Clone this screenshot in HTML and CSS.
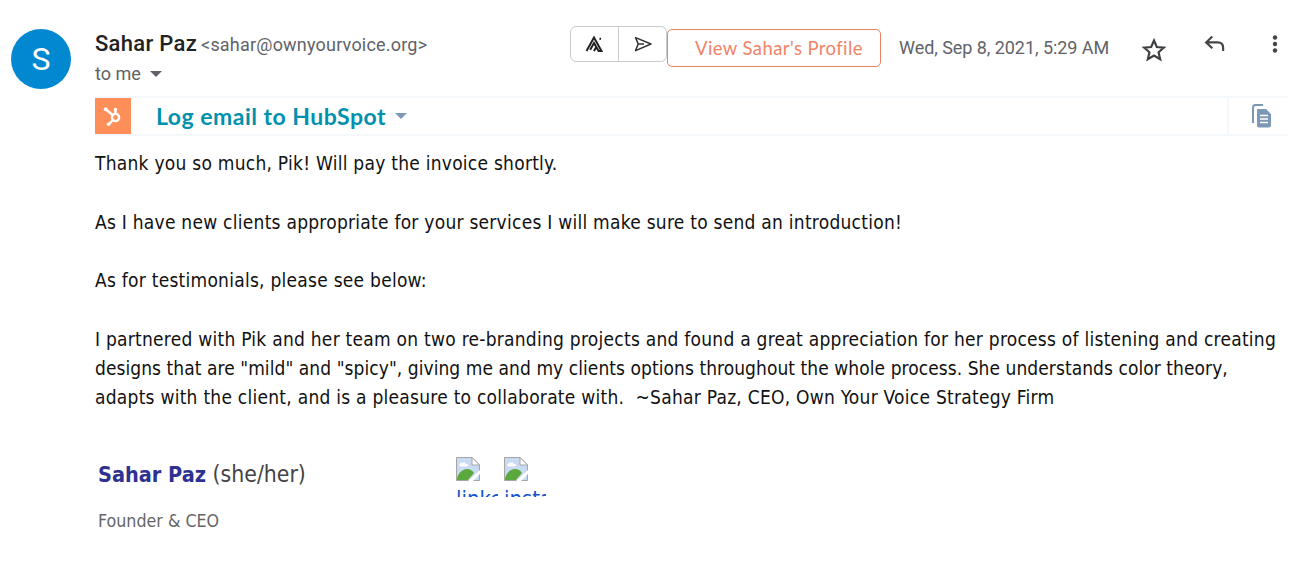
FILE: index.html
```html
<!DOCTYPE html>
<html lang="en">
<head>
<meta charset="utf-8">
<title>Email</title>
<link rel="stylesheet" href="styles.css">
</head>
<body>
<div class="mail">
  <div class="avatar">S</div>
  <div class="main">
    <div class="head">
      <div class="who">
        <div class="from"><span class="name">Sahar Paz</span> <span class="addr">&lt;sahar@ownyourvoice.org&gt;</span></div>
        <div class="to">to me <span class="caret"></span></div>
      </div>
      <div class="tools">
        <div class="toolgroup">
          <span class="toolbtn"><svg width="20" height="18" viewBox="0 0 20 18"><path d="M1.5 16 9 2.5 16.5 16 13.6 16 9 8 5.2 14.8M9 16l2-3.5M14.5 3.5l1.5.5" fill="none" stroke="#222" stroke-width="2"/></svg></span>
          <span class="toolbtn"><svg width="20" height="18" viewBox="0 0 20 18"><path d="M2.6 2.6 18 9 2.6 15.6 5.2 9ZM5.2 9H11" fill="none" stroke="#333" stroke-width="1.5" stroke-linejoin="round"/></svg></span>
        </div>
        <div class="profile">View Sahar's Profile</div>
        <div class="date">Wed, Sep 8, 2021, 5:29 AM</div>
        <svg class="star" width="26" height="26" viewBox="0 0 24 24"><path d="M12 3.2l2.6 6 6.5.6-4.9 4.3 1.5 6.4L12 17.1l-5.7 3.4 1.5-6.4-4.9-4.3 6.5-.6Z" fill="none" stroke="#3c4043" stroke-width="2" stroke-linejoin="miter"/></svg>
        <svg class="reply" width="26" height="26" viewBox="0 0 24 24"><path d="M9.5 5 3.8 10.500l5.700 5.500M4 10.500h10.500c3.200 0 5 2 5 5v3" fill="none" stroke="#444746" stroke-width="2"/></svg>
        <svg class="more" width="6" height="18" viewBox="0 0 6 18"><circle cx="3" cy="2.500" r="2.200" fill="#444746"/><circle cx="3" cy="9" r="2.200" fill="#444746"/><circle cx="3" cy="15.500" r="2.200" fill="#444746"/></svg>
      </div>
    </div>
    <div class="hub">
      <div class="hublogo"><svg width="24" height="24" viewBox="0 0 24 24"><g fill="none" stroke="#fff" stroke-width="2.400" stroke-linecap="round"><circle cx="14.500" cy="13.500" r="3.600"/><path d="M5 5.500 11.600 11M11.600 16.500 8 20M14.500 9.900V6"/></g><circle cx="4.800" cy="5.200" r="2" fill="#fff"/><circle cx="7.600" cy="20.200" r="1.800" fill="#fff"/><circle cx="14.500" cy="5.400" r="1.700" fill="#fff"/></svg></div>
      <div class="hubtext">Log email to HubSpot</div>
      <span class="hubcaret"></span>
      <div class="hubcopy"><svg width="24" height="26" viewBox="0 0 24 26"><path d="M4 20V4.500C4 3 5 2 6.500 2H14" fill="none" stroke="#7c98b6" stroke-width="2"/><path d="M8.500 6h8.500l5 5v11.500c0 1.200-1 2-2 2H10c-1.200 0-2-.8-2-2V7c0-.6.200-1 .5-1Z" fill="#7c98b6"/><path d="M11 12.500h8M11 16h8M11 19.500h8" stroke="#fff" stroke-width="1.500"/></svg></div>
    </div>
    <div class="body">
      <p>Thank you so much, Pik! Will pay the invoice shortly.</p>
      <p>As I have new clients appropriate for your services I will make sure to send an introduction!</p>
      <p>As for testimonials, please see below:</p>
      <p class="last">I partnered with Pik and her team on two re-branding projects and found a great appreciation for her process of listening and creating<br><span class="tight">designs that are "mild" and "spicy", giving me and my clients options throughout the whole process. She understands color theory,</span><br>adapts with the client, and is a pleasure to collaborate with.&nbsp; ~Sahar Paz, CEO, Own Your Voice Strategy Firm</p>
    </div>
    <div class="sig">
      <div class="sigtext">
        <div class="signame"><span class="sigblue">Sahar Paz</span> <span class="pron">(she/her)</span></div>
        <div class="sigrole">Founder &amp; CEO</div>
      </div>
      <div class="sigicons">
        <div class="broken">
          <svg width="24" height="24" viewBox="0 0 24 24"><path d="M.5.5H16L23.500 8V23.500H.5Z" fill="#c9dbf2" stroke="#a5a5a5"/><path d="M16 .5V8H23.500Z" fill="#fff" stroke="#a5a5a5"/><path d="M3 8c2-3 6-3 7-1 3 0 3 2.500 0 2.500H4Z" fill="#fff"/><path d="M1 23c0-6 5-11 10-11 3 0 6 2 7 4L12 23Z" fill="#5ba83c"/><path d="M12 24 24 13v4l-7 7Z" fill="#fff"/></svg>
          <a class="alt">linkedin</a>
        </div>
        <div class="broken">
          <svg width="24" height="24" viewBox="0 0 24 24"><path d="M.5.5H16L23.500 8V23.500H.5Z" fill="#c9dbf2" stroke="#a5a5a5"/><path d="M16 .5V8H23.500Z" fill="#fff" stroke="#a5a5a5"/><path d="M3 8c2-3 6-3 7-1 3 0 3 2.500 0 2.500H4Z" fill="#fff"/><path d="M1 23c0-6 5-11 10-11 3 0 6 2 7 4L12 23Z" fill="#5ba83c"/><path d="M12 24 24 13v4l-7 7Z" fill="#fff"/></svg>
          <a class="alt">instagram</a>
        </div>
      </div>
    </div>
  </div>
</div>
</body>
</html>
```
FILE: styles.css
```css
* { box-sizing: border-box; }
html, body { margin: 0; padding: 0; background: #fff; overflow: hidden; }
body { width: 1306px; height: 561px; font-family: Roboto, sans-serif; }
.mail { display: flex; padding: 29px 18px 0 11px; gap: 24px; }
.avatar { width: 60px; height: 60px; border-radius: 50%; background: #0288d1; color: #fff; display: flex; align-items: center; justify-content: center; font-size: 32px; flex: none; }
.main { flex: 1; min-width: 0; }
.head { display: flex; justify-content: space-between; height: 70px; margin-top: -3px; padding-right: 10px; }
.from { line-height: 30px; white-space: nowrap; padding-top: 3px; }
.name { font-size: 22px; font-weight: 500; color: #222; letter-spacing: .3px; }
.addr { font-size: 18px; color: #5f6368; letter-spacing: .2px; }
.to { font-size: 18px; color: #5f6368; line-height: 28px; margin-top: -1px; display: flex; align-items: center; gap: 9px; }
.caret { width: 0; height: 0; border-left: 6px solid transparent; border-right: 6px solid transparent; border-top: 6px solid #5f6368; }
.tools { display: flex; align-items: flex-start; }
.toolgroup { display: flex; width: 97px; height: 36px; border: 1px solid #ccc; border-radius: 6px; }
.toolbtn { flex: 1; display: flex; align-items: center; justify-content: center; }
.toolbtn + .toolbtn { border-left: 1px solid #ccc; }
.profile { width: 214px; height: 38px; margin-top: 3px; border: 1px solid #ec8366; border-radius: 5px; color: #ef8467; font-family: Lato, sans-serif; font-size: 18.500px; letter-spacing: .4px; line-height: 36px; padding-left: 27px; white-space: nowrap; }
.date { margin-left: 18px; margin-top: 10px; font-size: 18px; letter-spacing: -.05px; line-height: 24px; color: #5f6368; white-space: nowrap; width: 210px; }
.star { margin-left: 32px; margin-top: 11px; flex: none; }
.reply { margin-left: 35px; margin-top: 5px; flex: none; }
.more { margin-left: 44px; margin-top: 9px; flex: none; }
.hub { display: flex; align-items: center; height: 40px; border-top: 2px solid #f5f8fa; border-bottom: 2px solid #f5f8fa; }
.hublogo { width: 36px; height: 36px; background: #ff8f59; display: flex; align-items: center; justify-content: center; flex: none; }
.hubtext { margin-left: 25px; font-family: Lato, sans-serif; font-weight: 700; font-size: 23px; letter-spacing: .5px; color: #0091ae; white-space: nowrap; }
.hubcaret { margin-left: 9px; width: 0; height: 0; border-left: 6.500px solid transparent; border-right: 6.500px solid transparent; border-top: 6.500px solid #7c98b6; }
.hubcopy { margin-left: auto; width: 61px; height: 36px; padding-left: 5px; border-left: 2px solid #f5f8fa; display: flex; align-items: center; justify-content: center; }
.body { margin-top: 13px; font-family: "DejaVu Sans Condensed", "DejaVu Sans", sans-serif; font-size: 19px; letter-spacing: .25px; line-height: 29.300px; color: #111; white-space: nowrap; }
.body p { margin: 0 0 29.300px; }
.body .last { margin-bottom: 0; }
.tight { letter-spacing: .06px; }
.sig { display: flex; margin-top: 43px; padding-left: 3px; font-family: "DejaVu Sans Condensed", "DejaVu Sans", sans-serif; }
.sigtext { width: 358px; }
.signame { line-height: 34px; padding-top: 1px; }
.sigblue { font-size: 21.500px; font-weight: 700; color: #2e3192; }
.pron { font-size: 22.800px; color: #444; margin-left: 2px; }
.sigrole { font-size: 17.700px; line-height: 24px; color: #666; margin-top: 15px; }
.sigicons { display: flex; gap: 6px; padding-top: 1px; }
.broken { width: 42px; height: 40px; overflow: hidden; }
.broken svg { display: block; }
.alt { display: block; margin-top: 5px; font-size: 22px; line-height: 26px; color: #1155cc; white-space: nowrap; }
```
